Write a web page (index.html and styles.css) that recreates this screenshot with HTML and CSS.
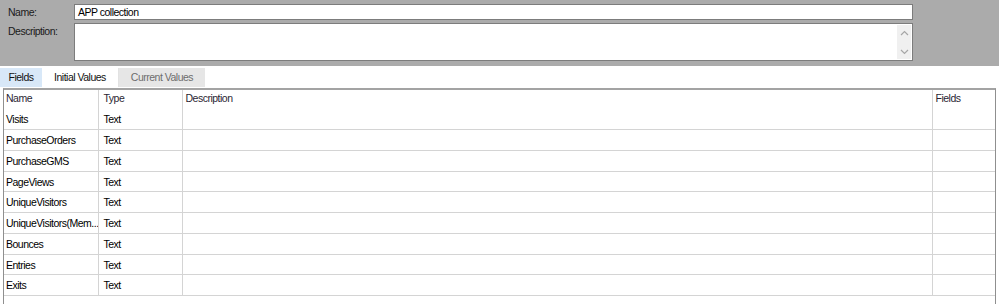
FILE: index.html
```html
<!DOCTYPE html>
<html lang="en">
<head>
    <meta charset="UTF-8">
    <title>APP collection</title>
    <link rel="stylesheet" href="styles.css">
</head>
<body>
    <div class="props">
        <div class="prop-row">
            <label class="prop-label">Name:</label>
            <div class="text-input">APP collection</div>
        </div>
        <div class="prop-row">
            <label class="prop-label">Description:</label>
            <div class="text-area">
                <div class="scrollbar">
                    <svg width="9" height="6" viewBox="0 0 9 6"><path d="M1 5 L4.5 1.5 L8 5" fill="none" stroke="#a6a6a6" stroke-width="1.2"/></svg>
                    <svg width="9" height="6" viewBox="0 0 9 6"><path d="M1 1 L4.5 4.5 L8 1" fill="none" stroke="#a6a6a6" stroke-width="1.2"/></svg>
                </div>
            </div>
        </div>
    </div>

    <div class="tabs">
        <div class="tab active">Fields</div>
        <div class="tab">Initial Values</div>
        <div class="tab disabled">Current Values</div>
    </div>

    <div class="grid">
        <table>
            <colgroup>
                <col class="c-name">
                <col class="c-type">
                <col class="c-desc">
                <col>
            </colgroup>
            <thead>
                <tr>
                    <th>Name</th>
                    <th>Type</th>
                    <th>Description</th>
                    <th>Fields</th>
                </tr>
            </thead>
            <tbody>
                <tr><td>Visits</td><td>Text</td><td></td><td></td></tr>
                <tr><td>PurchaseOrders</td><td>Text</td><td></td><td></td></tr>
                <tr><td>PurchaseGMS</td><td>Text</td><td></td><td></td></tr>
                <tr><td>PageViews</td><td>Text</td><td></td><td></td></tr>
                <tr><td>UniqueVisitors</td><td>Text</td><td></td><td></td></tr>
                <tr><td>UniqueVisitors(Mem...</td><td>Text</td><td></td><td></td></tr>
                <tr><td>Bounces</td><td>Text</td><td></td><td></td></tr>
                <tr><td>Entries</td><td>Text</td><td></td><td></td></tr>
                <tr><td>Exits</td><td>Text</td><td></td><td></td></tr>
            </tbody>
        </table>
    </div>
</body>
</html>
```

FILE: styles.css
```css
* {
    margin: 0;
    padding: 0;
    box-sizing: border-box;
}

body {
    font-family: "Liberation Sans", Arial, sans-serif;
    font-size: 10.5px;
    letter-spacing: -0.5px;
    color: #000;
    background: #fff;
    width: 999px;
    height: 304px;
    overflow: hidden;
}

/* property panel */
.props {
    background: #ababab;
    height: 66px;
    padding-top: 4px;
    display: flex;
    flex-direction: column;
    gap: 3px;
}

.prop-row {
    display: flex;
    align-items: flex-start;
}

.prop-label {
    width: 74px;
    padding-left: 8px;
    padding-top: 2px;
    color: #1a1a1a;
}

.text-input {
    width: 839px;
    height: 16px;
    background: #fff;
    border: 1px solid #7c7c7c;
    padding: 1px 3px;
    line-height: 12px;
}

.text-area {
    width: 839px;
    height: 38px;
    background: #fff;
    border: 1px solid #7c7c7c;
    display: flex;
    justify-content: flex-end;
    padding: 1px;
}

.scrollbar {
    width: 14px;
    background: #f0f0f0;
    display: flex;
    flex-direction: column;
    justify-content: space-between;
    align-items: center;
    padding: 5px 0 4px;
}

/* tabs */
.tabs {
    display: flex;
    height: 22px;
    padding-top: 2px;
}

.tab {
    height: 19px;
    line-height: 18px;
    color: #111;
    text-align: center;
}

.tab.active {
    width: 42px;
    background: #d8e8f8;
}

.tab:nth-child(2) {
    width: 77px;
    border-right: 1px solid #e2e2e2;
}

.tab.disabled {
    width: 86px;
    background: #e6e6e6;
    color: #6d6d6d;
}

/* field grid */
.grid {
    margin-left: 3px;
    width: 993px;
    height: 216px;
    border-top: 2px solid #a3a3a3;
    border-left: 1px solid #8f8f8f;
    border-right: 1px solid #8f8f8f;
}

table {
    width: 100%;
    border-collapse: collapse;
    table-layout: fixed;
}

.c-name { width: 94px; }
.c-type { width: 84px; }
.c-desc { width: 750px; }

th {
    height: 18px;
    font-weight: normal;
    text-align: left;
    vertical-align: top;
    padding: 2px 2px 0;
    color: #2b1f33;
    border-right: 1px solid #d4d4d4;
}

td {
    height: 21px;
    padding: 1px 1px 0 2px;
    border-right: 1px solid #d4d4d4;
    border-bottom: 1px solid #d4d4d4;
    white-space: nowrap;
    overflow: hidden;
}

tbody tr:nth-child(4n) td {
    height: 20px;
}

td:nth-child(2),
th:nth-child(2) {
    padding-left: 5px;
}

th:nth-child(3),
th:nth-child(4) {
    padding-left: 3px;
}

th:last-child,
td:last-child {
    border-right: none;
}
```
